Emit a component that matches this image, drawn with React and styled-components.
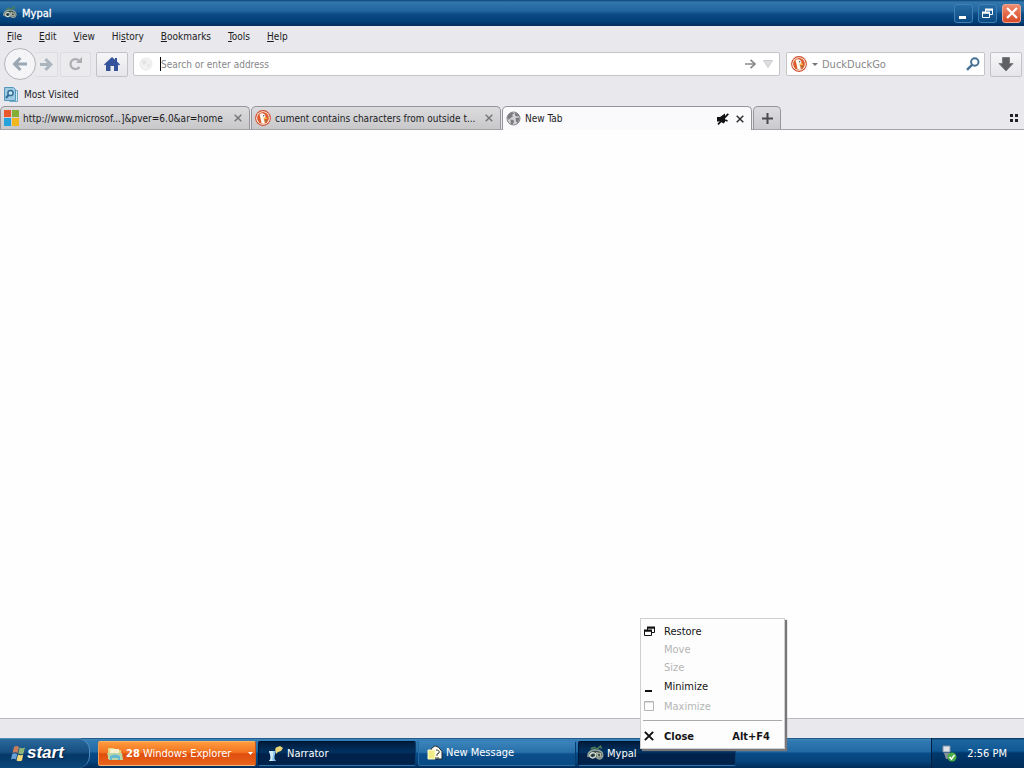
import React from 'react';
import styled, { createGlobalStyle, css } from 'styled-components';

const Global = createGlobalStyle`
  * { box-sizing: border-box; }
  body { margin: 0; background: #fefefe; }
  body, button, input { font-family: "DejaVu Sans Condensed", "DejaVu Sans", Tahoma, sans-serif; font-size: 10px; }
  button { margin: 0; padding: 0; border: 0; background: none; color: inherit; }
  svg { display: block; flex: none; }
`;

const Desktop = styled.div`
  min-height: 100vh;
  display: flex;
  flex-direction: column;
  color: #1c1c1e;
`;

const TitleBar = styled.header`
  height: 26px;
  padding: 0 3px;
  display: flex;
  align-items: center;
  gap: 5px;
  background: linear-gradient(#0a4377 0, #3276ac 2px, #20659f 11px, #0c4c86 14px, #003e76 22px, #002c5c 26px);
  color: #fff;
`;

const WindowTitle = styled.h1`
  margin: 0;
  flex: 1;
  font-size: 11px;
  font-weight: 400;
  -webkit-text-stroke: 0.3px #fff;
`;

const CaptionButton = styled.button`
  width: 19px;
  height: 19px;
  display: grid;
  place-items: center;
  border: 1px solid ${p => (p.$close ? '#f0a58f' : '#3d80b6')};
  border-radius: 3px;
  background: ${p => (p.$close ? 'linear-gradient(#ee8c70, #d84a28)' : 'linear-gradient(#276ca5, #0b4a82)')};
`;

const Chrome = styled.div`
  background: #e9e8ec;
`;

const MenuBar = styled.nav`
  height: 20px;
  padding: 0 7px;
  display: flex;
  align-items: center;
  gap: 17px;
  font-size: 10px;
`;

const NavBar = styled.div`
  height: 36px;
  padding: 2px 2px 2px 4px;
  display: flex;
  align-items: center;
`;

const BackButton = styled.button`
  width: 32px;
  height: 32px;
  display: grid;
  place-items: center;
  border: 1px solid #b4b5ba;
  border-radius: 50%;
  background: #f5f5f7;
`;

const ToolButton = styled.button`
  width: ${p => p.$width || 32}px;
  height: 25px;
  margin-right: ${p => p.$after || 0}px;
  display: grid;
  place-items: center;
  border: 1px solid ${p => (p.$faint ? '#dddde1' : '#c2c3c8')};
  border-left-width: ${p => (p.$joined ? 0 : 1)}px;
  border-radius: 2px;
  background: ${p => (p.$faint ? '#ebebee' : 'linear-gradient(#f6f6f8, #e6e6ea)')};
`;

const Field = styled.form`
  height: 24px;
  padding: 0 2px 0 5px;
  display: flex;
  align-items: center;
  border: 1px solid #c4c4c9;
  border-radius: 2px;
  background: #fff;
  ${p => (p.$search
    ? css`width: 199px; margin: 0 5px 0 6px; padding-left: 3px;`
    : css`flex: 1; min-width: 0;`)}
`;

const Caret = styled.span`
  width: 1px;
  height: 14px;
  margin-left: 7px;
  background: #000;
`;

const TextInput = styled.input`
  flex: 1;
  min-width: 0;
  padding: 0;
  border: 0;
  outline: 0;
  background: none;
  font-size: ${p => p.$size}px;
  &::placeholder { color: #87878b; opacity: 1; }
`;

const FieldButton = styled.button`
  height: 20px;
  width: ${p => p.$width || 18}px;
  display: grid;
  place-items: center;
`;

const BookmarksBar = styled.div`
  height: 24px;
  padding: 0 3px;
  display: flex;
  align-items: center;
`;

const Bookmark = styled.button`
  display: flex;
  align-items: center;
  gap: 6px;
  font-size: 10px;
`;

const TabStrip = styled.div`
  height: 24px;
  padding-right: 5px;
  display: flex;
  align-items: stretch;
  gap: 1px;
  border-bottom: 1px solid #a3a3a8;
`;

const Tab = styled.div`
  flex: 0 1 250px;
  min-width: 0;
  margin-bottom: ${p => (p.$active ? -1 : 0)}px;
  padding: 0 4px 0 3px;
  display: flex;
  align-items: center;
  gap: 4px;
  border: 1px solid #95959b;
  border-bottom: 0;
  border-radius: 5px 5px 0 0;
  background: ${p => (p.$active ? '#fafafc' : 'linear-gradient(#dcdcdf, #c8c8cb)')};
`;

const TabTitle = styled.span`
  flex: 1;
  min-width: 0;
  overflow: hidden;
  white-space: nowrap;
`;

const IconButton = styled.button`
  width: 14px;
  height: 14px;
  display: grid;
  place-items: center;
`;

const NewTabButton = styled.button`
  width: 28px;
  display: grid;
  place-items: center;
  border: 1px solid #95959b;
  border-bottom: 0;
  border-radius: 5px 5px 0 0;
  background: linear-gradient(#dddde0, #cacace);
`;

const ListTabsButton = styled(IconButton)`
  margin-left: auto;
  align-self: center;
  width: 10px;
`;

const Page = styled.main`
  flex: 1;
  background: #fefefe;
`;

const StatusBar = styled.footer`
  height: 20px;
  border-top: 1px solid #bcbcc0;
  background: #e9e8ec;
`;

const TaskBar = styled.div`
  height: 30px;
  display: flex;
  align-items: stretch;
  background: linear-gradient(#062f5a 0, #3f88bd 1px, #3079b2 3px, #226aa5 14px, #074b87 15px, #05447d 23px, #002c59 30px);
  color: #fff;
`;

const StartButton = styled.button`
  width: 90px;
  padding: 0 0 1px 11px;
  display: flex;
  align-items: center;
  gap: 1px;
  border: 1px solid #4d8bbc;
  border-width: 1px 1px 0 0;
  border-radius: 0 12px 12px 0;
  background: linear-gradient(#2b699c, #174f82 45%, #033766 55%, #0c477b);
  font-family: "Liberation Sans", Arial, sans-serif;
  font-size: 17px;
  font-weight: 700;
  font-style: italic;
  text-shadow: 1px 1px 1px #012448;
`;

const Tasks = styled.div`
  flex: 1;
  min-width: 0;
  padding: 3px 0 2px 8px;
  display: flex;
  gap: 2px;
`;

const TaskSlot = styled.div`
  position: relative;
  flex: 0 1 158px;
  min-width: 0;
  display: flex;
`;

const taskLook = {
  group: 'linear-gradient(#ff9a3e, #f27422 45%, #df4d0c 52%, #e8641c)',
  pressed: 'linear-gradient(#001c3c, #003262 45%, #002149 52%, #00234b)',
  normal: 'linear-gradient(#3a82b9, #2870aa 45%, #0b4f8b 52%, #084a84)',
};

const taskEdge = {
  group: '#ffb45f #c95418 #f5b47c #f0a05c',
  pressed: '#001430 #0b3f70 #2f74a9 #001838',
  normal: '#3b83ba #063c6c #2c6ea4 #23689f',
};

const Task = styled.button`
  width: 100%;
  height: 25px;
  padding: ${p => (p.$look === 'normal' ? '0 3px 2px 8px' : '0 2px 0 8px')};
  display: flex;
  align-items: center;
  gap: 3px;
  border: 1px solid;
  border-color: ${p => taskEdge[p.$look]};
  border-radius: 2px;
  background: ${p => taskLook[p.$look]};
  font-size: 11px;
  text-align: left;
  white-space: nowrap;
`;

const TaskLabel = styled.span`
  flex: 1;
`;

const Tray = styled.div`
  width: 93px;
  padding: 0 17px 0 9px;
  display: flex;
  align-items: center;
  justify-content: space-between;
  border-left: 1px solid #001f40;
  background: linear-gradient(#06305b 0, #1c669f 2px, #105894 13px, #00386c 15px, #002d5b 30px);
  font-size: 11px;
`;

const WindowMenu = styled.div`
  position: absolute;
  left: 62px;
  bottom: 17px;
  z-index: 2;
  width: 145px;
  padding: 3px 2px 1px;
  border: 1px solid #d0d0d2;
  background: #fdfdfd;
  box-shadow: 2px 2px 1px #77777a;
  color: #151515;
`;

const MenuItem = styled.button`
  width: 100%;
  height: ${p => p.$height || 18}px;
  padding: 0 12px 0 1px;
  display: flex;
  align-items: center;
  font-size: 11px;
  font-weight: ${p => (p.$bold ? 700 : 400)};
  color: ${p => (p.disabled ? '#b5b5b5' : '#151515')};
`;

const MenuIcon = styled.span`
  width: 20px;
`;

const MenuLabel = styled.span`
  flex: 1;
  text-align: left;
`;

const MenuRule = styled.hr`
  margin: 4px 0;
  border: 0;
  border-top: 1px solid #aaaaad;
`;

const Mnemonic = ({ children }) => (
  <button type="button">
    <u>{children[0]}</u>{children.slice(1)}
  </button>
);

const MypalIcon = ({ size = 14 }) => (
  <svg width={size} height={size} viewBox="0 0 14 14" fill="none">
    <path d="M1 10C0 6.500 3 4 7 4s6.500 2 5.800 5.500c-.8 2.500-3.800 2.500-5.300.5" fill="#37504f" stroke="#8fa09c" strokeWidth="1.300" />
    <path d="M2 9q1-3 3.500-2.500T7 9.500Q4.500 12 2 9" stroke="#d5d9d0" strokeWidth="1.200" />
    <path d="M8 6.500l3 .5.500 2.500-2.500.5Z" stroke="#c2bda9" />
    <path d="M3 3l3-1 2 1.500L11 1l1 2" stroke="#4d7d57" strokeWidth="1.300" />
    <circle cx="4.500" cy="8.500" r=".8" fill="#1a292d" />
  </svg>
);

const DuckIcon = ({ size = 16 }) => (
  <svg width={size} height={size} viewBox="0 0 16 16">
    <circle cx="8" cy="8" r="7.900" fill="#cf4b26" />
    <circle cx="8" cy="8" r="6.800" fill="#fff" />
    <circle cx="8" cy="8" r="5.900" fill="#dd5a2c" />
    <path d="M4.500 4.200C6 2.500 10 3 10.500 6l-.3 2L9 9.500l1 4q-2 .5-3.500-.2L5.500 8Z" fill="#fffaf2" />
    <path d="M8.500 7.500l4 .2-1 1.300-3 .3Z" fill="#f6bd42" />
    <circle cx="8.700" cy="5.800" r=".7" fill="#394b65" />
    <path d="M9.500 11l2-.7-.3 1.700Z" fill="#67a04a" />
  </svg>
);

const GlobeIcon = () => (
  <svg width="15" height="15" viewBox="0 0 15 15">
    <circle cx="7.500" cy="7.500" r="6.500" fill="#d2d2d5" stroke="#88888c" />
    <path d="M1.500 6q1-4 5-4.800L8 2.500 6 4l1 1.500L4.500 7 3 8.500 1.500 8Zm7.500-4.500q3 .7 4.300 3.500L11 5.500 9 4.500Zm-4.500 7l3 .5.500 2L6.500 13.500 4.800 13Zm5-1.500l3.500-.5.500 2-2 3.500-1.500-1.500Z" fill="#7d7d81" />
  </svg>
);

const CloseGlyph = ({ color = '#77777b', size = 8, weight = 1.5 }) => (
  <svg width={size} height={size} viewBox="0 0 8 8">
    <path d="M.7.7l6.600 6.600M7.300.7L.7 7.300" stroke={color} strokeWidth={weight} />
  </svg>
);

const RestoreGlyph = ({ color = '#fff' }) => (
  <svg width="11" height="11" viewBox="0 0 11 11" fill="none" stroke={color}>
    <path d="M3.500 4V1.500h7v5H8M3 2h8" />
    <path d="M.5 4.500h7v5h-7ZM0 5h8" />
    <path d="M3 1.500h8M0 4.500h8" strokeWidth="2" />
  </svg>
);

const MicrosoftIcon = () => (
  <svg width="15" height="16" viewBox="0 0 15 16">
    <path d="M0 0h7v7H0Z" fill="#e9582c" />
    <path d="M8 0h7v7H8Z" fill="#85ae35" />
    <path d="M0 8h7v8H0Z" fill="#26a3dc" />
    <path d="M8 8h7v8H8Z" fill="#f2b61e" />
  </svg>
);

const StartFlag = () => (
  <svg width="15" height="17" viewBox="0 0 15 17">
    <path d="M3 2q2.500-2 5 0L6.500 8Q4 6.500 1.500 8Z" fill="#c97d5c" />
    <path d="M8.700 2.500Q11 4 14 2.500L12.500 8.500Q10 10 7.200 8.500Z" fill="#8cb579" />
    <path d="M1.200 9Q4 7.500 6.300 9L5 14.500Q2.500 13 0 14.500Z" fill="#679ed5" />
    <path d="M7 9.500Q9.500 11 12.200 9.500L11 15.500Q8 17 5.500 15.500Z" fill="#f3d97c" />
  </svg>
);

export default function App() {
  return (
    <>
      <Global />
      <Desktop>
        <TitleBar>
          <MypalIcon />
          <WindowTitle>Mypal</WindowTitle>
          <CaptionButton aria-label="Minimize">
            <svg width="11" height="11"><path d="M1 8h7v3H1Z" fill="#fff" /></svg>
          </CaptionButton>
          <CaptionButton aria-label="Restore"><RestoreGlyph /></CaptionButton>
          <CaptionButton $close aria-label="Close"><CloseGlyph color="#fff" size={12} weight={1.5} /></CaptionButton>
        </TitleBar>

        <Chrome>
          <MenuBar>
            {['File', 'Edit', 'View'].map(name => <Mnemonic key={name}>{name}</Mnemonic>)}
            <button type="button">Hi<u>s</u>tory</button>
            {['Bookmarks', 'Tools', 'Help'].map(name => <Mnemonic key={name}>{name}</Mnemonic>)}
          </MenuBar>

          <NavBar>
            <BackButton aria-label="Back">
              <svg width="16" height="14" viewBox="0 0 16 14" fill="none" stroke="#9ba8b4" strokeWidth="3">
                <path d="M8.500 1L2.500 7l6 6M3 7h12" />
              </svg>
            </BackButton>
            <ToolButton $faint $joined $width={22} $after={2} aria-label="Forward">
              <svg width="13" height="13" viewBox="0 0 12 12" fill="none" stroke="#aab5be" strokeWidth="2.800">
                <path d="M5 1l5 5-5 5M0 6h10" />
              </svg>
            </ToolButton>
            <ToolButton $faint $width={31} $after={5} aria-label="Reload">
              <svg width="15" height="14" viewBox="0 0 15 14" fill="none">
                <path d="M11 3.500A5 5 0 1 0 11.500 10" stroke="#acadb0" strokeWidth="2.200" />
                <path d="M14 0v6H8Z" fill="#acadb0" />
              </svg>
            </ToolButton>
            <ToolButton $after={5} aria-label="Home">
              <svg width="16" height="14" viewBox="0 0 16 14">
                <path d="M8 0l3 2.700V1h2v3.500L16 7.500l-1 1L14 7.600V14h-4V9H6.500v5H2V7.600l-1 .9-1-1Z" fill="#34539a" />
              </svg>
            </ToolButton>
            <Field>
              <svg width="14" height="14" viewBox="0 0 14 14">
                <circle cx="7" cy="7" r="6" fill="#f2f2f3" stroke="#e9e9eb" />
                <path d="M3 3l5 1-1 3-3 1ZM8 8l3-2-1 5Z" fill="#e4e4e6" />
              </svg>
              <Caret />
              <TextInput $size={10} aria-label="Search or enter address" placeholder="Search or enter address" />
              <FieldButton type="button" aria-label="Go">
                <svg width="11" height="10" viewBox="0 0 11 10" fill="none" stroke="#8a8a8e" strokeWidth="1.700">
                  <path d="M5.500.8L10 5 5.500 9.200M0 5h9.500" />
                </svg>
              </FieldButton>
              <FieldButton type="button" aria-label="Show history">
                <svg width="10" height="8"><path d="M.5.500h9L5 7.500Z" fill="#dedee2" stroke="#cbcbd0" /></svg>
              </FieldButton>
            </Field>
            <Field $search>
              <FieldButton type="button" aria-label="Search engine"><DuckIcon /></FieldButton>
              <FieldButton type="button" $width={14} aria-label="Choose search engine">
                <svg width="6" height="3"><path d="M0 0h6L3 3Z" fill="#77777b" /></svg>
              </FieldButton>
              <TextInput $size={11} aria-label="Search" placeholder="DuckDuckGo" />
              <FieldButton type="button" aria-label="Submit search">
                <svg width="14" height="14" viewBox="0 0 14 14" fill="none" stroke="#477197">
                  <circle cx="8.800" cy="5" r="3.700" strokeWidth="2" />
                  <path d="M6 7.800L1 12.800" strokeWidth="2.500" />
                </svg>
              </FieldButton>
            </Field>
            <ToolButton aria-label="Downloads">
              <svg width="16" height="15" viewBox="0 0 16 15">
                <path d="M4.500.500h7v6h3.500L8 14 1 6.500h3.500Z" fill="#5f6063" stroke="#7c7c80" />
              </svg>
            </ToolButton>
          </NavBar>

          <BookmarksBar>
            <Bookmark>
              <svg width="15" height="15" viewBox="0 0 15 15" fill="none">
                <path d="M12.500 3.500h2v11h-8" fill="#d6e9f4" stroke="#6caacb" />
                <path d="M1.500.500h9l2 2v11h-11Z" fill="#9ecbe2" stroke="#5597bd" />
                <circle cx="7.500" cy="6" r="2.600" fill="#cfeaf6" stroke="#336f99" strokeWidth="1.500" />
                <path d="M5.500 8L3 11" stroke="#336f99" strokeWidth="2" />
              </svg>
              Most Visited
            </Bookmark>
          </BookmarksBar>

          <TabStrip>
            <Tab>
              <MicrosoftIcon />
              <TabTitle>http://www.microsof...]&amp;pver=6.0&amp;ar=home</TabTitle>
              <IconButton aria-label="Close tab"><CloseGlyph /></IconButton>
            </Tab>
            <Tab>
              <DuckIcon />
              <TabTitle>cument contains characters from outside t...</TabTitle>
              <IconButton aria-label="Close tab"><CloseGlyph /></IconButton>
            </Tab>
            <Tab $active>
              <GlobeIcon />
              <TabTitle>New Tab</TabTitle>
              <IconButton aria-label="Unmute tab">
                <svg width="13" height="12" viewBox="0 0 13 12">
                  <path d="M1 4h3l5-3.500V9L7.500 10.500 4.500 8.500H1Z" fill="#111" />
                  <path d="M12.300.8L2 11.300M9 7l2.500 1" stroke="#111" strokeWidth="1.700" />
                </svg>
              </IconButton>
              <IconButton aria-label="Close tab"><CloseGlyph color="#303033" /></IconButton>
            </Tab>
            <NewTabButton aria-label="New tab">
              <svg width="11" height="11"><path d="M5.500 0v11M0 5.500h11" stroke="#4b4b4f" strokeWidth="2" /></svg>
            </NewTabButton>
            <ListTabsButton aria-label="List all tabs">
              <svg width="8" height="8"><path d="M0 0h3v3H0ZM5 0h3v3H5ZM0 5h3v3H0ZM5 5h3v3H5Z" fill="#222" /></svg>
            </ListTabsButton>
          </TabStrip>
        </Chrome>

        <Page />
        <StatusBar />

        <TaskBar>
          <StartButton><StartFlag />start</StartButton>
          <Tasks>
            <TaskSlot>
              <Task $look="group">
                <svg width="16" height="14" viewBox="0 0 16 14">
                  <path d="M1 1h6l1 2h6v9H1Z" fill="#e3d57b" />
                  <path d="M3 2h9v5H3Z" fill="#f5efd0" />
                  <path d="M0 6h15l1 7H2Z" fill="#b9d7a5" />
                  <path d="M3 9q5-3 10 0v4h-2v-2H5v2H3Z" fill="#64b8d2" />
                </svg>
                <TaskLabel><b>28</b> Windows Explorer</TaskLabel>
                <svg width="5" height="3"><path d="M0 0h5L2.500 3Z" fill="#fff" /></svg>
              </Task>
            </TaskSlot>
            <TaskSlot>
              <Task $look="pressed">
                <svg width="17" height="17" viewBox="0 0 17 17">
                  <path d="M2 6h7l-1.500 5v3l1.500 2H2l1.500-2v-3Z" fill="#8ec6e8" />
                  <path d="M2 6h4v5L5 14l1 2H2l1.500-2v-3Z" fill="#d1e8f5" />
                  <path d="M9 2.500L13 1l3 2-2 3-3 1-2 2V6.500L8 5Z" fill="#ead675" />
                </svg>
                <TaskLabel>Narrator</TaskLabel>
              </Task>
            </TaskSlot>
            <TaskSlot>
              <Task $look="normal">
                <svg width="16" height="16" viewBox="0 0 16 16">
                  <path d="M4.500 3.500L8 .800l3.500 1.500 3.500 4V14H5Z" fill="#fffef1" stroke="#252c31" />
                  <path d="M1 5h7v9H1Z" fill="#f2ec85" stroke="#fffbd1" />
                  <path d="M9 5q4 0 3 3l-2 1v2M8 13h4" stroke="#343a3d" fill="none" />
                </svg>
                <TaskLabel>New Message</TaskLabel>
              </Task>
            </TaskSlot>
            <TaskSlot>
              <Task $look="pressed">
                <MypalIcon size={17} />
                <TaskLabel>Mypal</TaskLabel>
              </Task>
              <WindowMenu role="menu">
                <MenuItem role="menuitem">
                  <MenuIcon><RestoreGlyph color="#111" /></MenuIcon><MenuLabel>Restore</MenuLabel>
                </MenuItem>
                <MenuItem role="menuitem" disabled><MenuIcon /><MenuLabel>Move</MenuLabel></MenuItem>
                <MenuItem role="menuitem" disabled><MenuIcon /><MenuLabel>Size</MenuLabel></MenuItem>
                <MenuItem role="menuitem" $height={20}>
                  <MenuIcon><svg width="11" height="11"><path d="M1 9h7v2H1Z" fill="#111" /></svg></MenuIcon>
                  <MenuLabel>Minimize</MenuLabel>
                </MenuItem>
                <MenuItem role="menuitem" disabled $height={20}>
                  <MenuIcon><svg width="11" height="11"><path d="M.5.500h9v9h-9ZM0 1h10" fill="none" stroke="#b5b5b5" /></svg></MenuIcon>
                  <MenuLabel>Maximize</MenuLabel>
                </MenuItem>
                <MenuRule />
                <MenuItem role="menuitem" $bold $height={22}>
                  <MenuIcon><CloseGlyph color="#111" size={10} weight={1.6} /></MenuIcon>
                  <MenuLabel>Close</MenuLabel>
                  <span>Alt+F4</span>
                </MenuItem>
              </WindowMenu>
            </TaskSlot>
          </Tasks>
          <Tray>
            <svg width="16" height="17" viewBox="0 0 16 17">
              <path d="M2 1h7v6H2Z" fill="#dce3ea" stroke="#8793a0" />
              <path d="M3 8h6v6H5Z" fill="#85919b" />
              <circle cx="11" cy="12" r="4.500" fill="#4cac45" />
              <path d="M8.500 12l2 2 3-4" fill="none" stroke="#fff" strokeWidth="1.500" />
            </svg>
            <time>2:56 PM</time>
          </Tray>
        </TaskBar>
      </Desktop>
    </>
  );
}
